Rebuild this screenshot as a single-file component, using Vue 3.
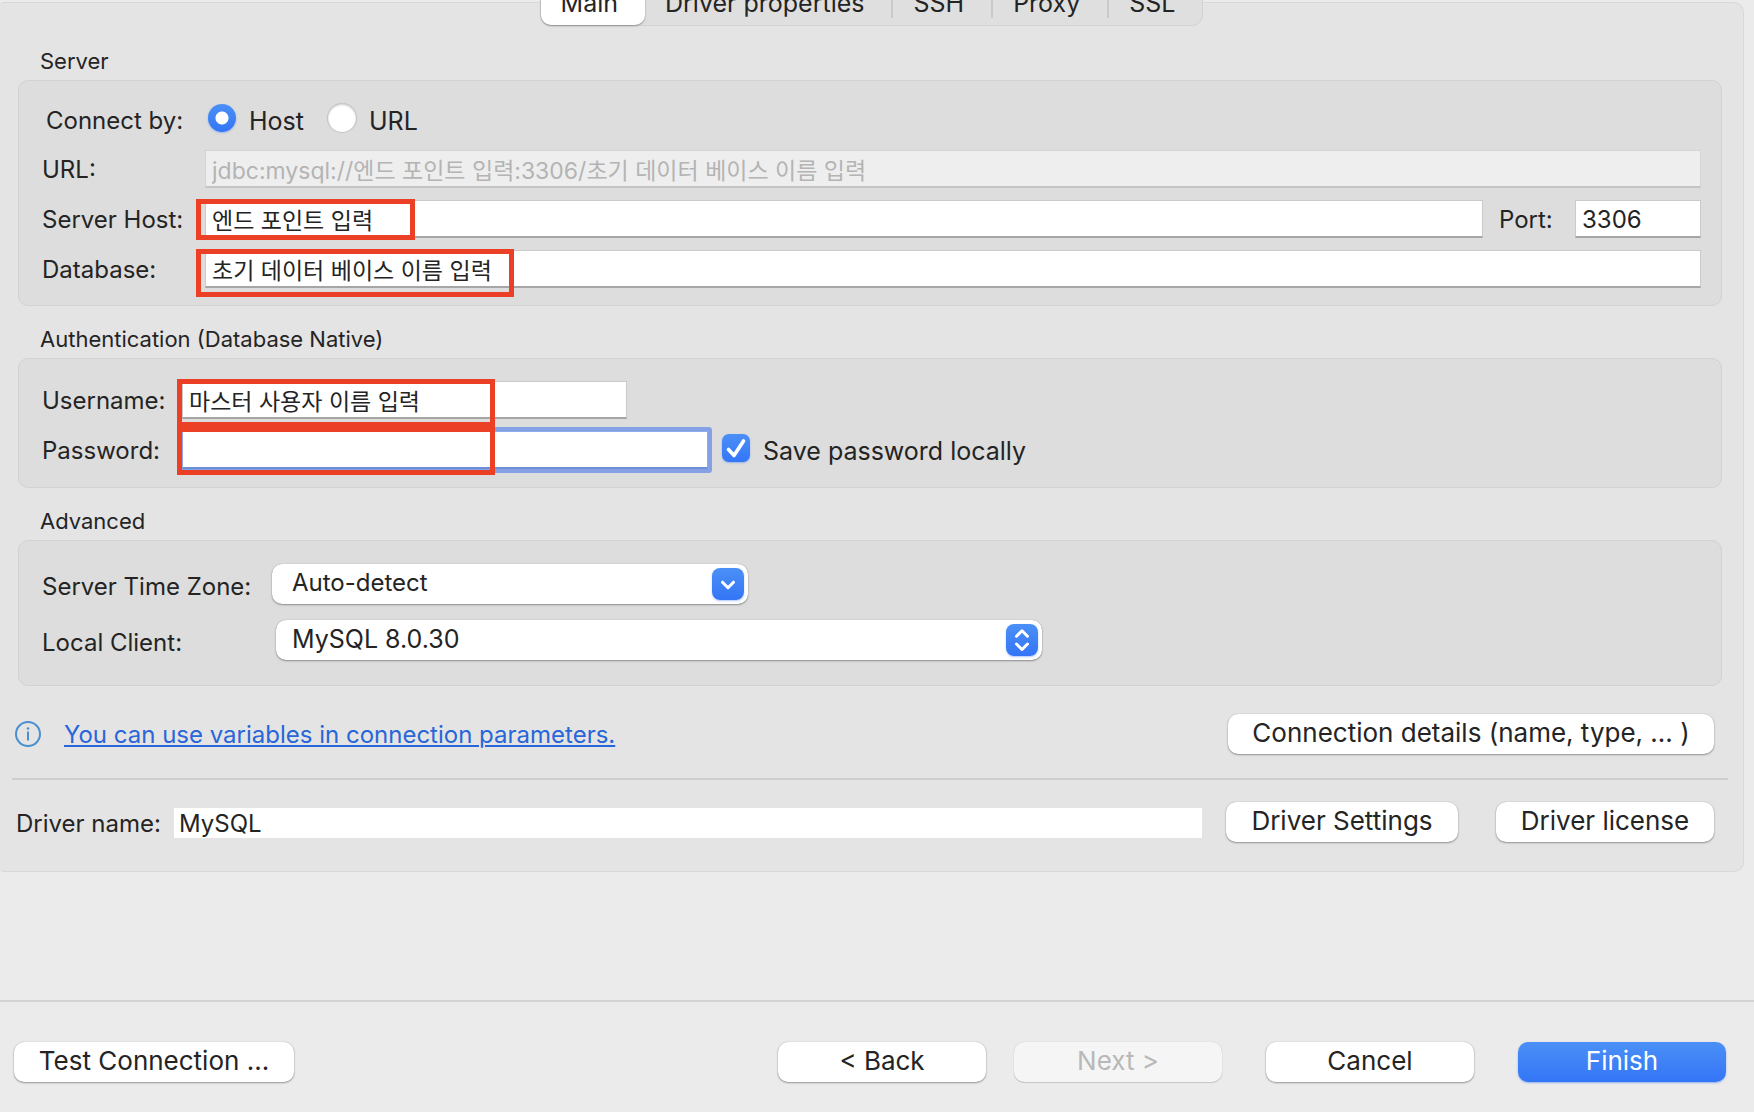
<template>
  <form class="dialog" @submit.prevent>
    <main class="panel">
      <nav class="tabs">
        <button v-for="tab in tabs" :key="tab" type="button"
                :class="['tab', { active: tab === activeTab }]"
                @click="activeTab = tab"><span>{{ tab }}</span></button>
      </nav>

      <section class="section">
        <h2>Server</h2>
        <div class="group server">
          <div class="row connect">
            <span id="connect-by" class="label indent">Connect by:</span>
            <div class="radios" role="radiogroup" aria-labelledby="connect-by">
              <label class="choice"><input v-model="connectBy" type="radio" value="host"><span>Host</span></label>
              <label class="choice"><input v-model="connectBy" type="radio" value="url"><span>URL</span></label>
            </div>
          </div>
          <div class="row">
            <label class="label" for="url">URL:</label>
            <input id="url" class="text" type="text" :value="url" disabled>
          </div>
          <div class="row">
            <label class="label" for="host">Server Host:</label>
            <div class="field">
              <input id="host" v-model="host" class="text" type="text">
              <i class="mark mark-host"></i>
            </div>
            <label class="label-port" for="port">Port:</label>
            <input id="port" v-model="port" class="text port" type="text">
          </div>
          <div class="row">
            <label class="label" for="database">Database:</label>
            <div class="field">
              <input id="database" v-model="database" class="text" type="text">
              <i class="mark mark-database"></i>
            </div>
          </div>
        </div>
      </section>

      <section class="section">
        <h2>Authentication (Database Native)</h2>
        <div class="group auth">
          <div class="row">
            <label class="label" for="username">Username:</label>
            <div class="field field-user">
              <input id="username" v-model="username" class="text" type="text">
              <i class="mark mark-user"></i>
            </div>
          </div>
          <div class="row">
            <label class="label" for="password">Password:</label>
            <div class="field field-password">
              <input id="password" v-model="password" class="text focused" type="password">
              <i class="mark mark-password"></i>
            </div>
            <label class="choice save"><input v-model="savePassword" type="checkbox"><span>Save password locally</span></label>
          </div>
        </div>
      </section>

      <section class="section">
        <h2>Advanced</h2>
        <div class="group advanced">
          <div class="row">
            <label class="label" for="zone">Server Time Zone:</label>
            <div class="select zone">
              <select id="zone"><option>Auto-detect</option></select>
              <svg viewBox="0 0 32 32"><path d="M10.5 14.2 16 19.8l5.5-5.6" /></svg>
            </div>
          </div>
          <div class="row">
            <label class="label" for="client">Local Client:</label>
            <div class="select client">
              <select id="client"><option>MySQL 8.0.30</option></select>
              <svg viewBox="0 0 32 32"><path d="M10.5 12.2 16 6.8l5.500 5.400M10.5 20 16 25.500l5.500-5.500" /></svg>
            </div>
          </div>
        </div>
      </section>

      <div class="hint">
        <svg class="info" viewBox="0 0 26 26">
          <circle cx="13" cy="13" r="12" />
          <path d="M13 10.5v9" />
          <circle class="dot" cx="13" cy="7.5" r="1.3" />
        </svg>
        <a href="#">You can use variables in connection parameters.</a>
        <button type="button" class="btn details">Connection details (name, type, ... )</button>
      </div>
      <hr>
      <div class="driver">
        <label for="driver">Driver name:</label>
        <input id="driver" type="text" value="MySQL" readonly>
        <button type="button" class="btn settings">Driver Settings</button>
        <button type="button" class="btn license">Driver license</button>
      </div>
    </main>

    <footer class="footer">
      <button type="button" class="btn test">Test Connection ...</button>
      <div class="steps">
        <button type="button" class="btn">&lt; Back</button>
        <button type="button" class="btn" disabled>Next &gt;</button>
      </div>
      <button type="button" class="btn">Cancel</button>
      <button type="submit" class="btn primary">Finish</button>
    </footer>
  </form>
</template>

<script setup>
import { computed, ref } from 'vue'

const tabs = ['Main', 'Driver properties', 'SSH', 'Proxy', 'SSL']
const activeTab = ref('Main')
const connectBy = ref('host')
const host = ref('엔드 포인트 입력')
const port = ref('3306')
const database = ref('초기 데이터 베이스 이름 입력')
const username = ref('마스터 사용자 이름 입력')
const password = ref('')
const savePassword = ref(true)

const url = computed(() => `jdbc:mysql://${host.value}:${port.value}/${database.value}`)
</script>

<style>
body { margin: 0; background: #ebebeb; }
</style>

<style scoped>
.dialog, .dialog * { box-sizing: border-box; }
.dialog {
  min-height: 100vh;
  display: flex; flex-direction: column;
  padding-top: 2px; overflow: hidden;
  background: #ebebeb; color: #242424;
  font-family: Inter, "Noto Sans CJK KR", sans-serif;
  font-size: 24px;
}
button, input, select { font: inherit; color: inherit; margin: 0; }
.panel {
  margin-right: 10px; padding-bottom: 29px;
  background: #e4e4e4;
  border: 1px solid #d8d8d8; border-left: none;
  border-radius: 4px 10px 10px 4px;
}

.tabs {
  display: flex; width: max-content; height: 44px;
  margin: -21px auto 20px;
  background: #dfdfdf;
  border: 1px solid #d3d3d3; border-radius: 11px;
}
.tab {
  display: flex; align-items: center;
  padding: 0 0 3px; border: none; background: none;
  font-size: 25px;
}
.tab span { padding: 0 27px 0 20px; }
.tab + .tab + .tab span { border-left: 2px solid #cacaca; }
.tab.active {
  background: #fff; border-radius: 10px;
  box-shadow: 0 1px 2px rgba(0,0,0,0.35);
}

.section { margin: 0 21px 18px 18px; }
h2 {
  margin: 0; padding: 1px 0 5px 22px;
  font-size: 22px; font-weight: 400; line-height: 28px;
}
.group {
  display: flex; flex-direction: column; gap: 12px;
  background: #ddd; border: 1px solid #d2d2d2; border-radius: 10px;
}
.row { display: flex; align-items: center; min-height: 38px; }
.label { flex: none; white-space: nowrap; }
.server { padding: 19px 20px 17px 23px; }
.server .label { width: 163px; }
.server .indent { padding-left: 4px; }
.connect { padding-top: 2px; }
.auth { padding: 22px 20px 18px 23px; }
.auth .label { width: 140px; }
.advanced { padding: 23px 20px 25px 23px; gap: 16px; }
.advanced .label { width: 230px; padding-top: 4px; }

.text {
  flex: 1; min-width: 0; width: 100%; height: 38px;
  padding: 0 6px; border-radius: 0;
  background: #fff; font-size: 23px;
  border: 1px solid #cacaca; border-bottom: 2px solid #a6a6a6;
  outline: none;
}
.text:disabled { background: #eee; color: #b4b4b4; border-color: #d4d4d4; border-bottom-color: #c4c4c4; }
.text.focused { border: 1px solid #8fabf0; border-bottom: 2px solid #6d8fd8; box-shadow: 0 0 0 4px #85a1e5; border-radius: 1px; }
.text.port { flex: none; width: 126px; padding-top: 2px; font-size: 24px; }
.label-port { width: 92px; padding-left: 16px; }
.field { position: relative; display: flex; flex: 1; min-width: 0; }
.field-user { flex: 0 1 445px; }
.field-password { flex: 0 1 526px; }

/* red annotation frames laid over the inputs */
.mark { position: absolute; border: 5px solid #eb4026; pointer-events: none; }
.mark-host { left: -9px; top: -1px; width: 219px; height: 41px; }
.mark-database { left: -9px; top: -1px; width: 318px; height: 48px; }
.mark-user { left: -5px; top: -2px; width: 318px; height: 48px; }
.mark-password { left: -5px; top: -4px; width: 318px; height: 48px; }

.radios { display: flex; gap: 24px; padding-left: 3px; }
.choice { display: flex; align-items: center; gap: 13px; font-size: 25px; white-space: nowrap; }
.choice input {
  appearance: none; flex: none;
  width: 28px; height: 28px; margin-bottom: 4px;
  background: #fff center / 100% no-repeat;
  box-shadow: 0 0 1px 1px rgba(0,0,0,0.12), inset 0 1px 2px rgba(0,0,0,0.18);
}
.choice span { padding-top: 1px; }
.choice input[type="radio"] { border-radius: 50%; }
.choice input[type="radio"]:checked {
  background: radial-gradient(circle, #fff 6px, transparent 7px), linear-gradient(#4b90f7, #3375f6);
  box-shadow: 0 1px 2px rgba(51,117,246,0.4);
}
.choice input[type="checkbox"] { border-radius: 7px; }
.choice input[type="checkbox"]:checked {
  background-color: #3b80f7;
  background-image: url("data:image/svg+xml,%3Csvg xmlns='http://www.w3.org/2000/svg' viewBox='0 0 28 28'%3E%3Cpath d='M6.5 15.5 12 21.5 21.5 7' fill='none' stroke='white' stroke-width='3.6' stroke-linecap='round' stroke-linejoin='round'/%3E%3C/svg%3E"), linear-gradient(#4b90f7, #3375f6);
  box-shadow: 0 1px 2px rgba(51,117,246,0.4);
}
.save { margin-left: 14px; }

.select { position: relative; height: 40px; }
.zone { flex: 0 1 476px; }
.client { flex: 0 1 766px; margin-left: 4px; font-size: 25px; }
.select select {
  appearance: none; width: 100%; height: 40px;
  padding: 0 44px 3px 20px;
  background: #fff; border: none; border-radius: 10px;
  box-shadow: 0 0 1px rgba(0,0,0,0.3), 0 1px 2px rgba(0,0,0,0.35);
}
.client select { padding-left: 16px; }
.select svg {
  position: absolute; right: 4px; top: 4px;
  width: 32px; height: 32px; border-radius: 8px;
  background: linear-gradient(#4b90f7, #3375f6);
  box-shadow: 0 1px 2px rgba(51,117,246,0.4);
  fill: none; stroke: #fff; stroke-width: 3; stroke-linecap: round; stroke-linejoin: round;
  pointer-events: none;
}

.btn {
  flex: none; width: 208px; height: 40px;
  padding: 0 0 3px; border: none; border-radius: 10px;
  background: #fff; font-size: 26px; white-space: nowrap;
  box-shadow: 0 0 1px rgba(0,0,0,0.3), 0 1px 2px rgba(0,0,0,0.35);
}
.btn:disabled { background: #f5f5f5; color: #b8b8b8; box-shadow: 0 0 1px rgba(0,0,0,0.2), 0 1px 1px rgba(0,0,0,0.15); }
.btn.primary {
  background: linear-gradient(#4b90f7, #3375f6); color: #fff;
  box-shadow: 0 1px 2px rgba(51,117,246,0.5);
}

.hint { display: flex; align-items: center; margin-top: 28px; padding: 0 29px 0 15px; }
.info { width: 26px; height: 26px; fill: none; stroke: #4a8fd0; stroke-width: 2; }
.info .dot { fill: #4a8fd0; stroke: none; }
.hint a {
  margin-left: 23px; color: #2866d9;
  text-decoration: underline; text-decoration-thickness: 2px; text-underline-offset: 2px;
}
.details { width: 486px; margin-left: auto; }
hr { margin: 24px 15px 22px 12px; border: none; border-top: 2px solid #cecece; }
.driver { display: flex; align-items: center; padding: 0 29px 0 16px; }
.driver label { width: 158px; margin-top: 2px; }
.driver input {
  flex: 1; min-width: 0; height: 30px; margin: 2px 24px 0 0;
  padding: 0 5px; border: none; background: #fff; outline: none;
}
.settings { width: 232px; margin-right: 38px; }
.license { width: 218px; }

.footer {
  display: flex; align-items: center; gap: 44px;
  margin-top: auto; padding: 40px 28px 30px 14px;
  border-top: 2px solid #d3d3d3;
}
.test { width: 280px; margin-right: auto; }
.steps { display: flex; gap: 28px; }
</style>
